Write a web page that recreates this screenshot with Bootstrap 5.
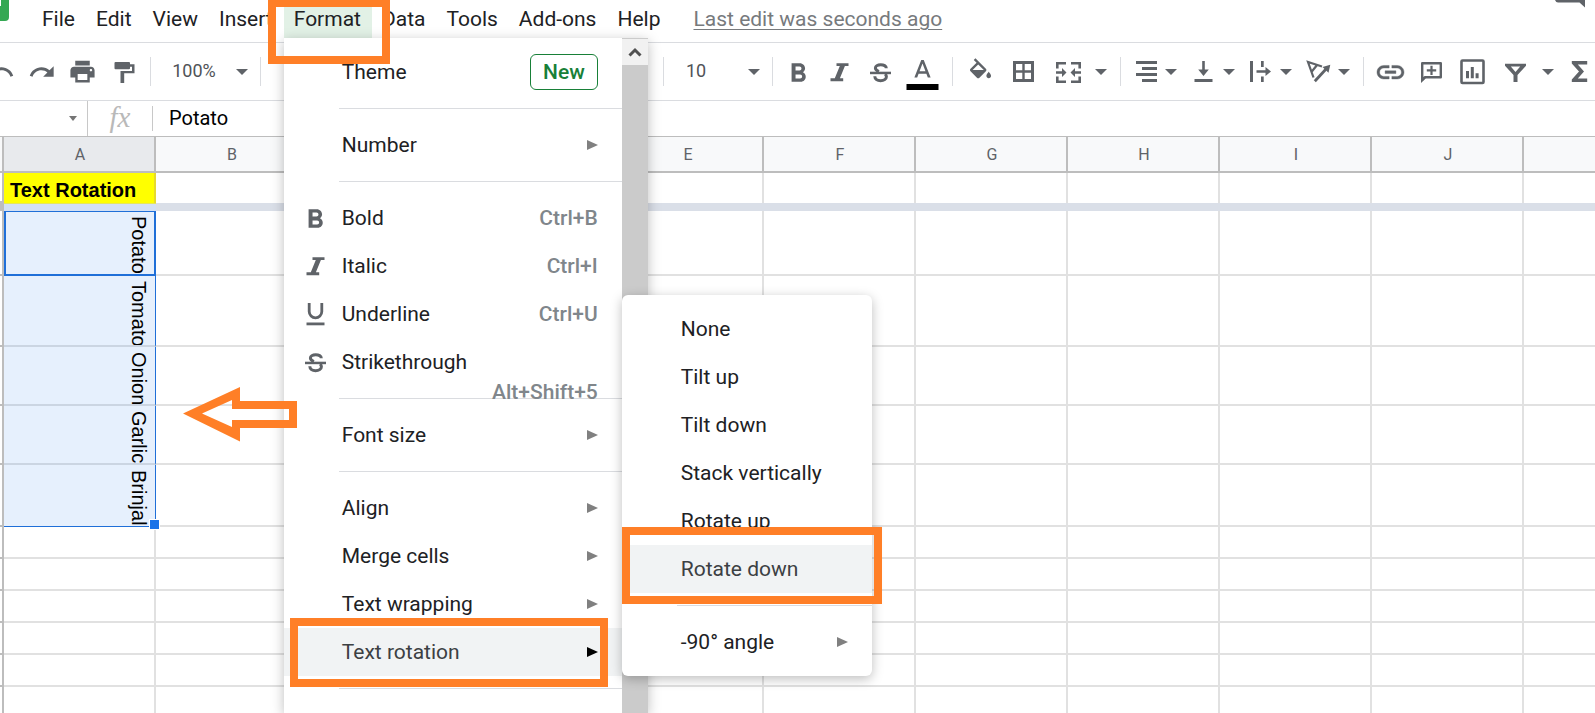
<!DOCTYPE html>
<html lang="en">
<head>
<meta charset="utf-8">
<meta name="viewport" content="width=device-width, initial-scale=1">
<title>Spreadsheet</title>
<link href="https://cdn.jsdelivr.net/npm/bootstrap@5.3.0/dist/css/bootstrap.min.css" rel="stylesheet">
<style>
  :root { --ink:#202124; --icon:#5f6368; --rule:#dadce0; --grid:#e1e1e1; --head:#bdbdbd; --note:#ff7f27; --sel:#1f6fd8; }
  body { font-family: Roboto, "Liberation Sans", sans-serif; color: var(--ink); font-size: 21px; line-height: 24px; }
  button { color: inherit; }

  /* menu bar */
  .menubar { height: 43px; border-bottom: 1px solid var(--rule); padding-left: 32px; }
  .logo { width: 9px; height: 21px; background: #34a853; border-radius: 0 0 4px 0; }
  .logo::after { content: ""; display: block; width: 1px; height: 6px; background: #fff; }
  .menu-btn { padding: 7px 11px 7px 10px; height: 38px; line-height: 24px; border: 0; background: none; display: block; }
  .menu-btn.active { background: #e2f1e6; }
  .last-edit { color: #777a7d; margin: 7px 0 0 22px; text-underline-offset: 3px; text-decoration-thickness: 1px; }

  /* toolbar */
  .toolbar { height: 58px; border-bottom: 1px solid var(--rule); color: var(--icon); }
  .tool { border: 0; background: none; padding: 0; width: 41px; height: 40px; flex: none; display: flex; align-items: center; justify-content: center; }
  .tool svg, .menu-icon svg { width: 27px; height: 27px; overflow: visible; fill: currentColor; }
  .tool-text { font-size: 18px; width: 60px; color: #505357; padding-bottom: 2px; }
  .caret { width: 16px; }
  .caret::before, .name-caret::before { content: ""; border: 6px solid transparent; border-top-color: currentColor; border-bottom: 0; }
  .vsep { width: 1px; height: 29px; background: var(--rule); flex: none; }
  .ln { fill: none !important; stroke: currentColor; }

  /* formula bar */
  .formula { height: 35px; }
  .name-box { width: 88px; border-right: 1px solid #c8c8c8; }
  .name-caret { border: 0; background: none; padding: 0; margin-right: 10px; color: #757575; display: flex; }
  .name-caret::before { border-width: 5px 4px 0; }
  .fx { font: italic 29px/30px "Liberation Serif", serif; color: #b9b9b9; width: 64px; text-align: center; padding-bottom: 3px; }
  .formula-input { border: 0; border-left: 1px solid #c8c8c8; font-size: 20px; height: 25px; padding: 0 0 2px 16px; color: #000; outline: 0; min-width: 0; }

  /* sheet */
  .sheet { border-top: 1px solid var(--head); min-height: 0; }
  .grid-table { table-layout: fixed; width: 100%; min-width: 1595px; border-collapse: separate; border-spacing: 0; line-height: 20px; }
  .grid-table th, .grid-table td { padding: 0; border-right: 2px solid var(--grid); border-bottom: 2px solid var(--grid); overflow: hidden; }
  .grid-table th:last-child, .grid-table td:last-child { border-right: 0; }
  .grid-table thead th { height: 36px; padding: 2px 0 0 2px; background: #f8f9fa; border-color: var(--head); font-weight: 400; font-size: 16px; text-align: center; color: var(--icon); vertical-align: middle; }
  .grid-table thead th.on { background: #e8eaed; }
  .grid-table tbody th { border-right-color: var(--head); border-bottom-color: var(--head); }
  .frozen td { border-bottom: 0; }
  .grid-table .title-cell { background: #ff0; border-color: #e6d92e; font: bold 20px/24px "Liberation Sans", sans-serif; color: #000; padding: 4px 0 0 6px; vertical-align: middle; white-space: nowrap; }
  .grid-table tr.band td, .grid-table tr.band th { height: 8px; background: #dadfe8; border: 0; }
  .grid-table tr.band th { background: var(--head); }
  .grid-table tr.band td.on { background: #d3e0f3; border-top: 1px solid #e6e65a; }
  .grid-table td.picked { background: #e6f0fd; border-right: 1px solid var(--sel); border-bottom-color: #cbd5e2; vertical-align: top; }
  .grid-table td.picked.current { border: 2px solid var(--sel); border-top-width: 1px; }
  .grid-table td.picked.last { border-bottom: 1px solid var(--sel); position: relative; overflow: visible; }
  .fill-handle { right: -4px; bottom: -3px; width: 9px; height: 9px; background: #1a73e8; outline: 1px solid #fff; }
  .turned { writing-mode: vertical-rl; font: 20px/24px "Liberation Sans", sans-serif; color: #000; margin: 5px 4px 0 auto; height: 50px; white-space: nowrap; }
  .current .turned { margin: 4px 3px 0 auto; }

  /* menus */
  .panel { font-size: 21px; color: var(--ink); border: 0; border-radius: 0; padding: 0; margin: 0; box-shadow: 0 3px 12px rgba(0,0,0,.26); z-index: 1000; }
  .format-menu { top: 38px; left: 0; width: 364px; height: calc(100vh - 38px); }
  .sub-menu { left: 100%; bottom: 0; width: 250px; padding: 10px 0; border-radius: 6px; z-index: 1010; }
  .entries { padding-top: 10px; width: 338px; }
  .entry { position: relative; height: 48px; }
  .entry > button { border: 0; background: none; width: 100%; height: 48px; padding: 0 24px 0 0; display: flex; align-items: center; text-align: left; }
  .entry > button.hot { background: #f1f3f4; color: #3c4043; }
  .menu-icon { width: 58px; padding: 0 0 2px 5px; display: flex; justify-content: center; flex: none; color: var(--icon); }
  .sub-menu .menu-icon { width: 59px; }
  .keys { color: #80868b; font-weight: 500; margin-left: auto; }
  .keys-below { position: absolute; right: 24px; top: 42px; }
  .arrow-r { margin-left: auto; width: 11px; border: 5px solid transparent; border-left: 11px solid #808080; border-right: 0; }
  .hot .arrow-r { border-left-color: #000; }
  .cut { height: 1px; margin: 12px 0 12px 55px; background: var(--rule); opacity: 1; border: 0; }
  .badge-new { margin-left: auto; border: 1px solid #188038; border-radius: 6px; color: #188038; font-weight: 500; padding: 5px 12px; }
  .scroll-track { width: 26px; background: #cbcbcb; }
  .scroll-up { height: 26px; margin-top: 1px; background: #f1f1f1; border: 0; padding: 0; display: flex; align-items: center; justify-content: center; }

  /* call-outs */
  .note { position: absolute; border: 8px solid var(--note); z-index: 1020; pointer-events: none; }
  .note-format { inset: -1px -18px -22px -16px; }
  .note-rotation { inset: -10px 14px -11px 6px; }
  .note-down { inset: -18px -10px -11px 0; }
  .note-arrow { position: absolute; left: 183px; top: 250px; z-index: 1020; }
  .chat { position: absolute; top: 0; right: 10px; }
</style>
</head>
<body class="vh-100 overflow-hidden bg-white">
<div class="d-flex flex-column vh-100 overflow-hidden">

  <header class="menubar position-relative d-flex flex-shrink-0">
    <div class="logo position-absolute start-0 top-0"></div>
    <ul class="list-unstyled d-flex m-0">
      <li><button class="menu-btn">File</button></li>
      <li><button class="menu-btn">Edit</button></li>
      <li><button class="menu-btn">View</button></li>
      <li><button class="menu-btn">Insert</button></li>
      <li class="position-relative">
        <button class="menu-btn active" aria-expanded="true">Format</button>
        <div class="dropdown-menu panel format-menu show d-flex">
          <div class="entries">
            <div class="entry"><button><span class="menu-icon"></span>Theme<span class="badge-new">New</span></button></div>
            <hr class="cut">
            <div class="entry"><button><span class="menu-icon"></span>Number<span class="arrow-r"></span></button></div>
            <hr class="cut">
            <div class="entry"><button><span class="menu-icon"><svg viewBox="2 0 20.500 20.500"><use href="#i-bold"/></svg></span>Bold<span class="keys">Ctrl+B</span></button></div>
            <div class="entry"><button><span class="menu-icon"><svg viewBox="0 0 27 27"><use href="#i-italic"/></svg></span>Italic<span class="keys">Ctrl+I</span></button></div>
            <div class="entry"><button><span class="menu-icon"><svg viewBox="0 0 27 27"><path class="ln" stroke-width="2.800" d="M7.200 3v8.600a6.300 6.300 0 0 0 12.600 0V3"/><path d="M4.500 22.500h18v2.800h-18z"/></svg></span>Underline<span class="keys">Ctrl+U</span></button></div>
            <div class="entry"><button><span class="menu-icon"><svg viewBox="0 0 27 27"><use href="#i-strike"/></svg></span>Strikethrough<span class="keys keys-below">Alt+Shift+5</span></button></div>
            <hr class="cut">
            <div class="entry"><button><span class="menu-icon"></span>Font size<span class="arrow-r"></span></button></div>
            <hr class="cut">
            <div class="entry"><button><span class="menu-icon"></span>Align<span class="arrow-r"></span></button></div>
            <div class="entry"><button><span class="menu-icon"></span>Merge cells<span class="arrow-r"></span></button></div>
            <div class="entry"><button><span class="menu-icon"></span>Text wrapping<span class="arrow-r"></span></button></div>
            <div class="entry"><button class="hot" aria-expanded="true"><span class="menu-icon"></span>Text rotation<span class="arrow-r"></span></button>
              <div class="note note-rotation"></div>
              <div class="dropdown-menu panel sub-menu show">
                <div class="entry"><button><span class="menu-icon"></span>None</button></div>
                <div class="entry"><button><span class="menu-icon"></span>Tilt up</button></div>
                <div class="entry"><button><span class="menu-icon"></span>Tilt down</button></div>
                <div class="entry"><button><span class="menu-icon"></span>Stack vertically</button></div>
                <div class="entry"><button><span class="menu-icon"></span>Rotate up</button></div>
                <div class="entry"><button class="hot"><span class="menu-icon"></span>Rotate down</button><div class="note note-down"></div></div>
                <hr class="cut">
                <div class="entry"><button><span class="menu-icon"></span>-90° angle<span class="arrow-r"></span></button></div>
              </div>
            </div>
            <hr class="cut">
          </div>
          <div class="scroll-track d-flex flex-column">
            <button class="scroll-up" aria-label="Scroll up"><svg width="14" height="12" viewBox="0 0 14 12"><path d="M1.500 9.500 7 4l5.500 5.500" fill="none" stroke="#505050" stroke-width="3"/></svg></button>
          </div>
        </div>
        <div class="note note-format"></div>
      </li>
      <li><button class="menu-btn">Data</button></li>
      <li><button class="menu-btn">Tools</button></li>
      <li><button class="menu-btn">Add-ons</button></li>
      <li><button class="menu-btn">Help</button></li>
    </ul>
    <a href="#" class="last-edit">Last edit was seconds ago</a>
    <svg class="chat" width="30" height="8" viewBox="0 0 30 8"><path d="M0 0h30v7.500l-5.500-5H3Q1 2.500 0 0z" fill="#5f6368"/></svg>
  </header>

  <div class="toolbar d-flex align-items-center flex-shrink-0">
    <button class="tool" aria-label="Undo" style="margin-left:-20px"><svg style="width:28px;height:28px" viewBox="0 0 24 24"><path d="M12.500 8c-2.650 0-5.050.99-6.900 2.600L2 7v9h9l-3.620-3.620c1.390-1.160 3.160-1.880 5.120-1.880 3.540 0 6.550 2.310 7.600 5.500l2.370-.78C21.080 11.030 17.150 8 12.500 8z"/></svg></button>
    <button class="tool" aria-label="Redo"><svg style="width:28px;height:28px" viewBox="0 0 24 24"><path d="M18.400 10.600C16.550 8.990 14.150 8 11.500 8c-4.650 0-8.580 3.030-9.960 7.220L3.900 16c1.050-3.190 4.050-5.500 7.600-5.500 1.950 0 3.730.72 5.120 1.880L13 16h9V7l-3.600 3.600z"/></svg></button>
    <button class="tool" aria-label="Print"><svg style="width:29px;height:29px" viewBox="0 0 24 24"><path d="M19 8H5c-1.660 0-3 1.340-3 3v6h4v4h12v-4h4v-6c0-1.660-1.340-3-3-3zm-3 11H8v-5h8v5zm3-7c-.55 0-1-.45-1-1s.45-1 1-1 1 .45 1 1-.45 1-1 1zm-1-9H6v4h12V3z"/></svg></button>
    <button class="tool" aria-label="Paint format" style="margin-left:1px"><svg viewBox="0 0 27 27"><path d="M4.500 4H18q1 0 1 1v1.300h4.500V15.300H13.200V25H9.500V13H21V8.800H19v1.500q0 1-1 1H4.500q-1 0-1-1V5q0-1 1-1z"/></svg></button>
    <span class="vsep" style="margin-left:5px"></span>
    <button class="tool tool-text" style="margin-left:13px">100%</button>
    <button class="tool caret" aria-label="Zoom options" style="margin-left:10px"></button>
    <span class="vsep" style="margin-left:10px"></span>
    <button class="tool tool-text" aria-label="Currency" style="margin-left:-2px">$</button>
    <span class="vsep" style="margin-left:344px"></span>
    <button class="tool tool-text" style="margin-left:2px">10</button>
    <button class="tool caret" aria-label="Font sizes" style="margin-left:20px"></button>
    <span class="vsep" style="margin-left:10px"></span>
    <button class="tool" aria-label="Bold" style="margin-left:5px"><svg viewBox="2 0 20.500 20.500"><use href="#i-bold"/></svg></button>
    <button class="tool" aria-label="Italic"><svg viewBox="0 0 27 27"><use href="#i-italic"/></svg></button>
    <button class="tool" aria-label="Strikethrough"><svg viewBox="0 0 27 27"><use href="#i-strike"/></svg></button>
    <button class="tool" aria-label="Text colour" style="margin-left:1px"><svg viewBox="0 0 27 27"><path transform="translate(-1.500 -1.700) scale(1.250)" d="M11 3L5.500 17h2.250l1.120-3h6.250l1.120 3h2.250L13 3h-2zm-1.380 9L12 5.670 14.380 12H9.620z"/><path fill="#000" d="M-2.500 26h32v6h-32z"/></svg></button>
    <span class="vsep" style="margin-left:9px"></span>
    <button class="tool" aria-label="Fill colour" style="margin-left:7px"><svg viewBox="0 0 27 27"><path transform="translate(-.5 .3) scale(1.170)" d="M16.560 8.940L7.620 0 6.210 1.410l2.380 2.380-5.150 5.150c-.59.59-.59 1.540 0 2.120l5.500 5.500c.29.29.68.44 1.060.44s.77-.15 1.060-.44l5.500-5.500c.59-.58.59-1.530 0-2.120zM5.210 10L10 5.210 14.790 10H5.210zM19 11.500s-2 2.170-2 3.500c0 1.100.9 2 2 2s2-.9 2-2c0-1.330-2-3.500-2-3.500z"/></svg></button>
    <button class="tool" aria-label="Borders" style="margin-left:2px"><svg viewBox="0 0 27 27"><path class="ln" stroke-width="3" d="M4.500 4.500h18v18h-18z"/><path class="ln" stroke-width="2.400" d="M13.500 4v19M4 13.500h19"/></svg></button>
    <button class="tool" aria-label="Merge cells" style="margin-left:4px"><svg viewBox="0 0 27 27"><path class="ln" stroke-width="2.600" d="M2.300 10.500V5.300H11M16 5.300h8.700v5.200M2.300 18.500v5.200H11M16 23.700h8.700v-5.200"/><path d="M1 13.300h6V10l4.500 4.500L7 19v-3.300H1zM26 13.300h-6V10l-4.500 4.500L20 19v-3.300h6z"/></svg></button>
    <button class="tool caret" aria-label="Merge options" style="margin-left:4px"></button>
    <span class="vsep" style="margin-left:11px"></span>
    <button class="tool" aria-label="Horizontal align" style="margin-left:5px"><svg viewBox="0 0 27 27"><path d="M3 3h21v3H3zM9 9h15v3H9zM3 15h21v3H3zM9 21h15v3H9z"/></svg></button>
    <button class="tool caret" aria-label="Horizontal align options" style="margin-left:-4px"></button>
    <button class="tool" aria-label="Vertical align" style="margin-left:4px"><svg viewBox="0 0 27 27"><path d="M4.500 21h18v3h-18zM12.200 3h2.600v8.500h4L13.500 18l-5.300-6.500h4z"/></svg></button>
    <button class="tool caret" aria-label="Vertical align options" style="margin-left:-3px"></button>
    <button class="tool" aria-label="Text wrapping" style="margin-left:3px"><svg viewBox="0 0 27 27"><path d="M3 3h3v21H3zM14 3h2.700v6H14zM14 18.500h2.700V24H14zM9.500 12.200h9V9l5.500 4.500-5.500 4.500v-3.200h-9z"/></svg></button>
    <button class="tool caret" aria-label="Wrapping options" style="margin-left:-3px"></button>
    <button class="tool" aria-label="Text rotation" style="margin-left:4px"><svg viewBox="0 0 27 27"><path class="ln" stroke-width="2.200" d="M17 8.500 3 4l5.500 15.500M12.500 6.500l-6.500 8"/><path class="ln" stroke-width="2.800" d="M9.800 23.200 22 10"/><path d="M17.500 9l7.800-2.300-1.800 8z"/></svg></button>
    <button class="tool caret" aria-label="Rotation options" style="margin-left:-3px"></button>
    <span class="vsep" style="margin-left:11px"></span>
    <button class="tool" aria-label="Insert link" style="margin-left:6px"><svg viewBox="0 0 27 27"><path transform="translate(-2.700 -2) scale(1.350)" stroke="currentColor" stroke-width=".3" d="M3.900 12c0-1.710 1.390-3.100 3.100-3.100h4V7H7c-2.760 0-5 2.240-5 5s2.240 5 5 5h4v-1.900H7c-1.710 0-3.100-1.390-3.100-3.100zM8 13h8v-2H8v2zm9-6h-4v1.900h4c1.710 0 3.100 1.390 3.100 3.100s-1.390 3.100-3.100 3.100h-4V17h4c2.760 0 5-2.240 5-5s-2.240-5-5-5z"/></svg></button>
    <button class="tool" aria-label="Insert comment"><svg viewBox="0 0 27 27"><path class="ln" stroke-width="2.400" stroke-linejoin="round" d="M4.200 22V5.200h18.600v14H7z"/><path d="M3 18v7l5-5zM12.400 7.700h2.200v3.600h3.600v2.200h-3.600v3.600h-2.200v-3.600H8.800v-2.200h3.600z"/></svg></button>
    <button class="tool" aria-label="Insert chart"><svg viewBox="0 0 27 27"><rect class="ln" stroke-width="2.600" x="2.500" y="2.500" width="22" height="22.500" rx="1"/><path d="M7 13h3v7.300H7zM11.800 9h3v11.300h-3zM16.600 15.300h3v5h-3z"/></svg></button>
    <button class="tool" aria-label="Filter" style="margin-left:2px"><svg viewBox="0 0 27 27"><path fill-rule="evenodd" d="M3 5.700h21v2L15.500 17v7h-4v-7L3 7.700zM8.800 8.600l4.700 5.400 4.700-5.400z"/></svg></button>
    <button class="tool caret" aria-label="Filter options" style="margin-left:4px"></button>
    <button class="tool" aria-label="Functions" style="margin-left:3px"><svg viewBox="0 0 27 27"><path d="M5.800 3h15.400v3.500h-9.400l6.200 7-6.200 7h9.400V24H5.800v-2.500l7.200-8-7.200-8z"/></svg></button>
  </div>

  <div class="formula d-flex align-items-center flex-shrink-0">
    <div class="name-box h-100 d-flex align-items-center justify-content-end"><button class="name-caret" aria-label="Named ranges"></button></div>
    <label class="fx" for="cell-value">fx</label>
    <input class="formula-input flex-grow-1" id="cell-value" value="Potato">
  </div>

  <main class="sheet position-relative flex-grow-1">
    <div class="overflow-hidden h-100">
      <table class="grid-table">
        <colgroup><col style="width:4px"><col span="10" style="width:152px"><col></colgroup>
        <thead><tr><th></th><th class="on">A</th><th>B</th><th>C</th><th>D</th><th>E</th><th>F</th><th>G</th><th>H</th><th>I</th><th>J</th><th></th></tr></thead>
        <tbody id="cells"></tbody>
      </table>
    </div>
    <svg class="note-arrow" width="115" height="55" viewBox="0 0 115 55"><path fill="#ff7f27" fill-rule="evenodd" d="M0 26.500 57 0v14h57v27H57v13.500zM19 26.500l30 13.500v-7h57v-11H49v-9z"/></svg>
  </main>
</div>

<svg width="0" height="0" class="position-absolute">
  <defs>
    <path id="i-bold" d="M15.600 10.790c.97-.67 1.650-1.770 1.650-2.790 0-2.260-1.750-4-4-4H7v14h7.040c2.090 0 3.710-1.700 3.710-3.790 0-1.520-.86-2.820-2.150-3.420zM10 6.500h3c.83 0 1.500.67 1.500 1.500s-.67 1.500-1.500 1.500h-3v-3zm3.500 9H10v-3h3.500c.83 0 1.500.67 1.500 1.500s-.67 1.500-1.500 1.500z"/>
    <path id="i-italic" d="M10.500 5.300h12v2.800h-3.600l-5 12.200h3.300v3H4.500v-3h4.300l5-12.200h-3.300z"/>
    <g id="i-strike"><path d="M3 13.700h21v2.500H3z"/><path fill="none" stroke="currentColor" stroke-width="3" d="M19.300 10.300c0-2.300-2.500-3.600-5.600-3.600-3.200 0-5.300 1.400-5.300 3.400 0 1.600 1.100 2.600 3.500 3.600M7.800 18.300c0 2.700 2.500 4.400 5.800 4.400s5.800-1.600 5.800-3.900c0-1.200-.5-2-1.200-2.800"/></g>
  </defs>
</svg>

<script>
  // [row height, kind, text]
  const rows = [
    [30, 'title', 'Text Rotation'], [8, 'band'],
    [65, 'current', 'Potato'], [71, '', 'Tomato'], [59, '', 'Onion'], [59, '', 'Garlic'], [62, 'last', 'Brinjal'],
    [32], [32], [32], [32], [32], [32], [32]
  ];
  document.getElementById('cells').innerHTML = rows.map(([h, kind, text]) => {
    const rest = '<td></td>'.repeat(10);
    if (kind === 'title') return `<tr class="frozen" style="height:${h}px"><th></th><td class="title-cell">${text}</td>${rest}</tr>`;
    if (kind === 'band') return `<tr class="band"><th></th><td class="on"></td>${rest}</tr>`;
    const first = text ? `<td class="picked ${kind}"><div class="turned">${text}</div>${kind === 'last' ? '<span class="fill-handle position-absolute"></span>' : ''}</td>` : '<td></td>';
    return `<tr style="height:${h}px"><th></th>${first}${rest}</tr>`;
  }).join('');
</script>
<script src="https://cdn.jsdelivr.net/npm/bootstrap@5.3.0/dist/js/bootstrap.bundle.min.js"></script>
</body>
</html>
